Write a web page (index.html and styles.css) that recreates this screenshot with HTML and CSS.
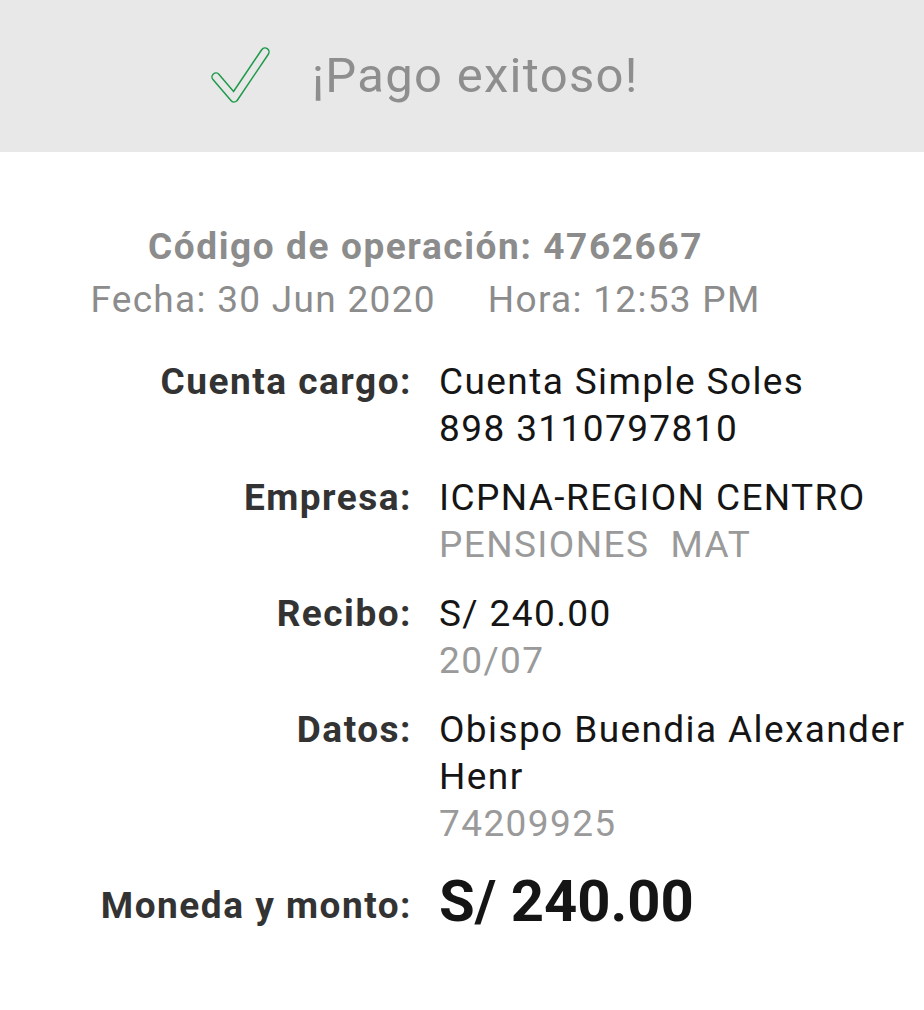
FILE: index.html
```html
<!DOCTYPE html>
<html lang="es">
<head>
<meta charset="utf-8">
<link rel="stylesheet" href="styles.css">
</head>
<body>
<header class="banner">
  <svg class="check" width="64" height="64" viewBox="0 0 64 64">
    <polyline points="6,31 24,52 55,6" fill="none" stroke="#1f9a4a" stroke-width="9.5" stroke-linecap="round" stroke-linejoin="round"/>
    <polyline points="6,31 24,52 55,6" fill="none" stroke="#e8e8e8" stroke-width="6.5" stroke-linecap="round" stroke-linejoin="round"/>
  </svg>
  <span class="banner-title">¡Pago exitoso!</span>
</header>
<main class="receipt">
  <section class="meta">
    <div class="code">Código de operación: 4762667</div>
    <div class="datetime"><span>Fecha: 30 Jun 2020</span><span>Hora: 12:53 PM</span></div>
  </section>
  <dl class="details">
    <dt>Cuenta cargo:</dt>
    <dd><span class="line">Cuenta Simple Soles</span><span class="line">898 3110797810</span></dd>
    <dt>Empresa:</dt>
    <dd><span class="line">ICPNA-REGION CENTRO</span><span class="line muted">PENSIONES&nbsp; MAT</span></dd>
    <dt>Recibo:</dt>
    <dd><span class="line">S/ 240.00</span><span class="line muted">20/07</span></dd>
    <dt>Datos:</dt>
    <dd><span class="line">Obispo Buendia Alexander Henr</span><span class="line muted">74209925</span></dd>
    <dt class="total-label">Moneda y monto:</dt>
    <dd class="total">S/ 240.00</dd>
  </dl>
</main>
</body>
</html>
```
FILE: styles.css
```css
* { box-sizing: border-box; }
body {
  margin: 0;
  background: #ffffff;
  font-family: Roboto, "Liberation Sans", sans-serif;
}
.banner {
  height: 152px;
  background: #e8e8e8;
  display: flex;
  align-items: center;
  padding-left: 210px;
  gap: 38px;
}
.check { display: block; margin-top: 4px; }
.banner-title {
  font-size: 49px;
  color: #8e8e8e;
  letter-spacing: 1.3px;
  margin-top: -2px;
}
.receipt {
  padding-top: 72px;
}
.meta {
  width: 851px;
  text-align: center;
  color: #8c8c8c;
}
.code {
  font-weight: 700;
  font-size: 37px;
  line-height: 46px;
  letter-spacing: 1.6px;
}
.datetime {
  font-size: 37px;
  line-height: 60px;
  letter-spacing: 1.3px;
  display: flex;
  justify-content: center;
  gap: 52px;
}
.details {
  margin: 28px 0 0;
  display: grid;
  grid-template-columns: 412px 1fr;
  column-gap: 27px;
  row-gap: 22px;
  font-size: 37px;
  line-height: 47px;
  letter-spacing: 1.4px;
}
.details dt {
  text-align: right;
  font-weight: 700;
  color: #333333;
  letter-spacing: 1.5px;
}
.details dd {
  margin: 0;
  color: #151515;
}
.line { display: block; }
.muted { color: #9a9a9a; }
.total-label { align-self: end; line-height: 54px; margin-top: 4px; }
.total {
  font-size: 58px;
  font-weight: 700;
  color: #333333;
  line-height: 64px;
  letter-spacing: 0;
  margin-top: 4px;
}
```
